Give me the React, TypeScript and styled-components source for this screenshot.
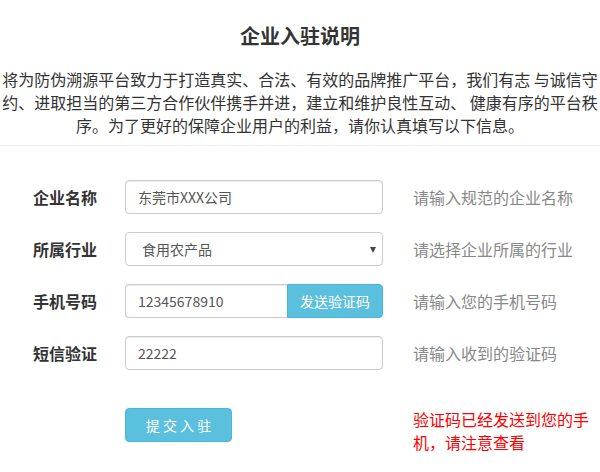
import styled, { createGlobalStyle } from "styled-components";

const GlobalStyle = createGlobalStyle`
  body {
    margin: 0;
    background: #ffffff;
    font-family: "Noto Sans CJK SC", "Noto Sans", sans-serif;
    color: #333333;
  }
`;

const introLines = [
  "将为防伪溯源平台致力于打造真实、合法、有效的品牌推广平台，我们有志 与诚信守",
  "约、进取担当的第三方合作伙伴携手并进，建立和维护良性互动、 健康有序的平台秩",
  "序。为了更好的保障企业用户的利益，请你认真填写以下信息。",
];

export default function App() {
  return (
    <>
      <GlobalStyle />
      <Page>
        <Header>
          <Title>企业入驻说明</Title>
          <Intro>
            {introLines.map((line) => (
              <IntroLine key={line}>{line}</IntroLine>
            ))}
          </Intro>
        </Header>

        <Form onSubmit={(e) => e.preventDefault()}>
          <Row>
            <Label htmlFor="company">企业名称</Label>
            <Input id="company" defaultValue="东莞市XXX公司" />
            <Hint>请输入规范的企业名称</Hint>
          </Row>

          <Row>
            <Label htmlFor="industry">所属行业</Label>
            <SelectBox>
              <Select id="industry" defaultValue="food">
                <option value="food">食用农产品</option>
                <option value="other">其他</option>
              </Select>
              <Caret aria-hidden />
            </SelectBox>
            <Hint>请选择企业所属的行业</Hint>
          </Row>

          <Row>
            <Label htmlFor="phone">手机号码</Label>
            <Group>
              <GroupInput id="phone" defaultValue="12345678910" />
              <SendButton type="button">发送验证码</SendButton>
            </Group>
            <Hint>请输入您的手机号码</Hint>
          </Row>

          <Row>
            <Label htmlFor="code">短信验证</Label>
            <Input id="code" defaultValue="22222" />
            <Hint>请输入收到的验证码</Hint>
          </Row>

          <SubmitRow>
            <span />
            <SubmitButton type="submit">提 交 入 驻</SubmitButton>
            <Notice>验证码已经发送到您的手机，请注意查看</Notice>
          </SubmitRow>
        </Form>
      </Page>
    </>
  );
}

const Page = styled.div`
  width: 600px;
  min-height: 472px;
  overflow: hidden;
`;

const Header = styled.header`
  padding-top: 22px;
  padding-bottom: 8px;
  border-bottom: 1px solid #eeeeee;
  text-align: center;
`;

const Title = styled.h1`
  margin: 0;
  font-size: 20px;
  line-height: 28px;
  font-weight: 700;
  color: #333333;
`;

const Intro = styled.div`
  margin-top: 18px;
  font-size: 16px;
  line-height: 23px;
  color: #333333;
`;

const IntroLine = styled.div`
  white-space: nowrap;
  display: flex;
  justify-content: center;
`;

const Form = styled.form`
  display: flex;
  flex-direction: column;
  gap: 18px;
  padding-top: 34px;
`;

const Row = styled.div`
  display: grid;
  grid-template-columns: 62px 258px auto;
  column-gap: 30px;
  align-items: center;
  height: 34px;
  padding-left: 33px;
`;

const Label = styled.label`
  font-size: 16px;
  font-weight: 700;
  color: #333333;
  white-space: nowrap;
`;

const Input = styled.input`
  box-sizing: border-box;
  width: 258px;
  height: 34px;
  padding: 0 12px;
  border: 1px solid #cccccc;
  border-radius: 4px;
  font-family: "Noto Sans CJK SC", "Noto Sans", sans-serif;
  font-size: 14px;
  color: #555555;
  box-shadow: inset 0 1px 1px rgba(0, 0, 0, 0.075);
  outline: none;
`;

const SelectBox = styled.div`
  position: relative;
  width: 258px;
  height: 34px;
`;

const Select = styled.select`
  box-sizing: border-box;
  width: 100%;
  height: 34px;
  padding: 0 16px;
  border: 1px solid #cccccc;
  border-radius: 4px;
  background: #ffffff;
  appearance: none;
  font-family: "Noto Sans CJK SC", "Noto Sans", sans-serif;
  font-size: 14px;
  color: #555555;
  outline: none;
`;

const Caret = styled.span`
  position: absolute;
  right: 7px;
  top: 15px;
  width: 0;
  height: 0;
  border-left: 3.5px solid transparent;
  border-right: 3.5px solid transparent;
  border-top: 6px solid #444444;
  pointer-events: none;
`;

const Group = styled.div`
  display: flex;
  width: 258px;
  height: 34px;
`;

const GroupInput = styled(Input)`
  width: 162px;
  border-right: none;
  border-radius: 4px 0 0 4px;
`;

const SendButton = styled.button`
  flex: 1;
  height: 34px;
  border: 1px solid #46b8da;
  border-radius: 0 4px 4px 0;
  background: #5bc0de;
  color: #ffffff;
  font-family: "Noto Sans CJK SC", "Noto Sans", sans-serif;
  font-size: 14px;
  padding: 0;
  cursor: pointer;
`;

const Hint = styled.span`
  font-size: 16px;
  color: #888888;
  white-space: nowrap;
`;

const SubmitRow = styled.div`
  display: grid;
  grid-template-columns: 62px 258px 180px;
  column-gap: 30px;
  align-items: start;
  margin-top: 20px;
  padding-left: 33px;
`;

const SubmitButton = styled.button`
  justify-self: start;
  width: 107px;
  height: 34px;
  border: 1px solid #46b8da;
  border-radius: 4px;
  background: #5bc0de;
  color: #ffffff;
  font-family: "Noto Sans CJK SC", "Noto Sans", sans-serif;
  font-size: 14px;
  cursor: pointer;
`;

const Notice = styled.p`
  margin: 0;
  font-size: 16px;
  line-height: 23px;
  color: #ff0000;
`;
